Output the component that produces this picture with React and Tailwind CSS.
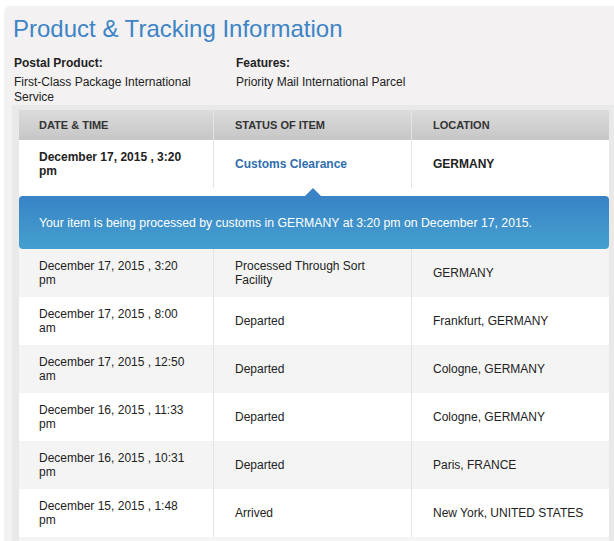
import React from 'react';

const rows = [
  { date: 'December 17, 2015 , 3:20 pm', status: 'Processed Through Sort Facility', location: 'GERMANY' },
  { date: 'December 17, 2015 , 8:00 am', status: 'Departed', location: 'Frankfurt, GERMANY' },
  { date: 'December 17, 2015 , 12:50 am', status: 'Departed', location: 'Cologne, GERMANY' },
  { date: 'December 16, 2015 , 11:33 pm', status: 'Departed', location: 'Cologne, GERMANY' },
  { date: 'December 16, 2015 , 10:31 pm', status: 'Departed', location: 'Paris, FRANCE' },
  { date: 'December 15, 2015 , 1:48 pm', status: 'Arrived', location: 'New York, UNITED STATES' },
];

const App = () => {
  return (
    <div className="h-[541px] overflow-hidden bg-white font-['Liberation_Sans',Arial,sans-serif] text-[#222]">
      <div className="ml-[4px] mt-[6px] mr-[-20px] h-[600px] rounded-tl-[6px] bg-[#f3f1f2]">
        {/* heading */}
        <h1 className="pl-[9px] pt-[9px] text-[24px] leading-[28px] text-[#3d84c6]">
          Product &amp; Tracking Information
        </h1>

        <div className="mt-[13px] flex pl-[10px] text-[12px] leading-[15px]">
          <div className="w-[222px]">
            <p className="font-bold">Postal Product:</p>
            <p className="mt-[4px] w-[195px]">First-Class Package International Service</p>
          </div>
          <div>
            <p className="font-bold">Features:</p>
            <p className="mt-[4px]">Priority Mail International Parcel</p>
          </div>
        </div>

        {/* table */}
        <div className="ml-[8px] bg-[#e9e9e9] pl-[7px] pr-[25px] pt-[5px]">
          <div className="w-[590px] text-[12px] leading-[14px]">
            <div className="grid h-[30px] grid-cols-[195px_198px_197px] bg-gradient-to-b from-[#dcdcdc] to-[#c6c6c6] text-[11px] font-bold uppercase text-[#333]">
              <div className="flex items-center border-r border-[#e4e4e4] pl-[20px]">Date &amp; Time</div>
              <div className="flex items-center border-r border-[#e4e4e4] pl-[21px]">Status of Item</div>
              <div className="flex items-center pl-[21px]">Location</div>
            </div>

            {/* highlighted row */}
            <div className="bg-white">
              <div className="grid h-[48px] grid-cols-[195px_198px_197px] font-bold">
                <div className="flex items-center border-r border-[#e4e4e4] pl-[20px] pr-[22px]">December 17, 2015 , 3:20 pm</div>
                <div className="flex items-center border-r border-[#e4e4e4] pl-[21px] text-[#2f6eae]">Customs Clearance</div>
                <div className="flex items-center pl-[21px]">GERMANY</div>
              </div>
              <div className="relative h-[8px]">
                <svg className="absolute bottom-0 left-[286px]" width="16" height="8" viewBox="0 0 16 8">
                  <path d="M0 8 L8 0 L16 8 Z" fill="#3a84c5" />
                </svg>
              </div>
            </div>
            <div className="bg-[#f4f4f4]">
              <div className="flex h-[53px] items-center rounded-[4px] bg-gradient-to-b from-[#3a83c5] to-[#44a0cf] pl-[20px] text-[12.25px] text-white">
                Your item is being processed by customs in GERMANY at 3:20 pm on December 17, 2015.
              </div>
            </div>

            {rows.map((r, i) => (
              <div
                key={i}
                className={`grid h-[48px] grid-cols-[195px_198px_197px] ${i % 2 === 0 ? 'bg-[#f4f4f4]' : 'bg-white'}`}
              >
                <div className="flex items-center border-r border-[#e4e4e4] pl-[20px] pr-[22px]">{r.date}</div>
                <div className="flex items-center border-r border-[#e4e4e4] pl-[21px] pr-[30px]">{r.status}</div>
                <div className="flex items-center pl-[21px]">{r.location}</div>
              </div>
            ))}
            <div className="h-[48px] bg-[#f4f4f4]" />
          </div>
        </div>
      </div>
    </div>
  );
};

export default App;
